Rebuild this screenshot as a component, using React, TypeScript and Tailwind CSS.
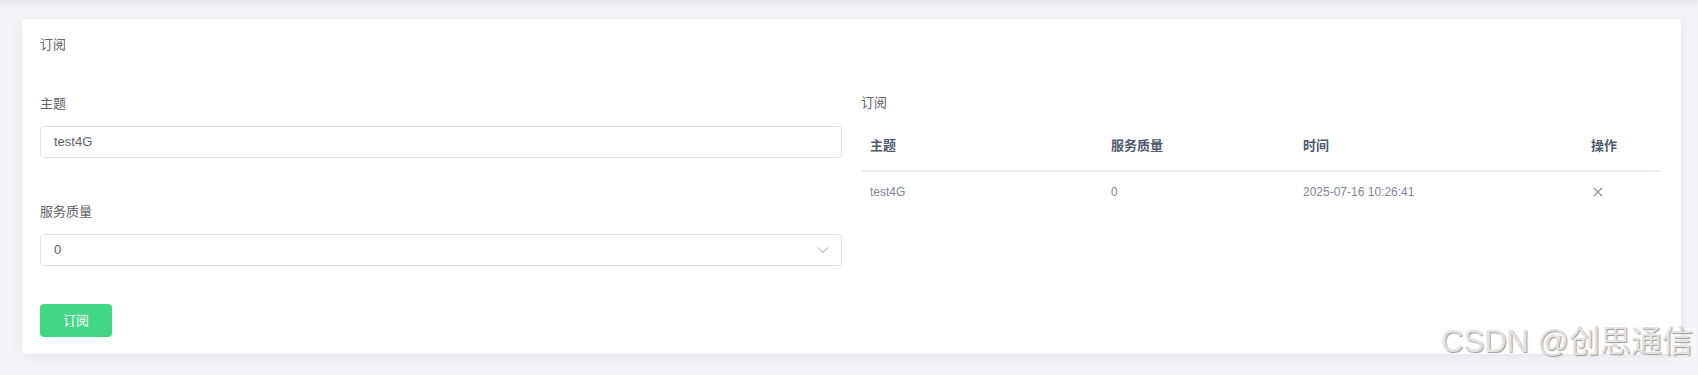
import React from "react";

const font = "font-['Liberation_Sans','Noto_Sans_CJK_SC',sans-serif]";

const rows = [{ topic: "test4G", qos: "0", time: "2025-07-16 10:26:41" }];

function ChevronDown() {
  return (
    <svg width="12" height="8" viewBox="0 0 12 8" fill="none">
      <path d="M1 1.5 6 6.5 11 1.5" stroke="#c0c4cc" strokeWidth="1.2" />
    </svg>
  );
}

function CloseIcon() {
  return (
    <svg width="10" height="10" viewBox="0 0 10 10" fill="none">
      <path d="M1 1 9 9M9 1 1 9" stroke="#8a8f99" strokeWidth="1.1" />
    </svg>
  );
}

export default function App() {
  return (
    <div className={`relative min-h-[375px] bg-[#f4f5f9] ${font}`}>
      {/* shadow of the card above */}
      <div className="h-[10px] bg-linear-to-b from-[#e7e9ee] to-[#f4f5f9]" />

      <div className="ml-[22px] mr-[17px] mt-[9px] rounded-[4px] bg-white pt-[16px] pb-[17px] pl-[18px] pr-[19px] shadow-[0_2px_12px_rgba(0,0,0,0.07)]">
        <h2 className="text-[13px] leading-[20px] text-[#606266]">订阅</h2>

        <div className="mt-[37px] flex gap-[19px]">
          {/* form */}
          <div className="w-[802px] shrink-0 pt-[2px]">
            <label className="block text-[13px] leading-[20px] text-[#606266]">主题</label>
            <div className="mt-[12px] flex h-[32px] items-center rounded-[4px] border border-[#dcdfe6] px-[13px] text-[13px] text-[#606266]">
              test4G
            </div>

            <label className="mt-[44px] block text-[13px] leading-[20px] text-[#606266]">服务质量</label>
            <div className="mt-[12px] flex h-[32px] items-center justify-between rounded-[4px] border border-[#dcdfe6] pl-[13px] pr-[12px] text-[13px] text-[#606266]">
              <span>0</span>
              <ChevronDown />
            </div>

            <button className="mt-[38px] flex h-[33px] w-[72px] items-center justify-center rounded-[4px] bg-[#43d886] text-[13px] text-white">
              订阅
            </button>
          </div>

          {/* subscriptions */}
          <div className="flex-1 pt-[1px]">
            <div className="text-[13px] leading-[20px] text-[#606266]">订阅</div>
            <div className="mt-[9px]">
              <div className="grid h-[50px] grid-cols-[241px_192px_288px_1fr] items-center border-b-2 border-[#ebeef5] text-[13px] font-bold text-[#515a6e]">
                <div className="pl-[9px]">主题</div>
                <div className="pl-[9px]">服务质量</div>
                <div className="pl-[9px]">时间</div>
                <div className="pl-[9px]">操作</div>
              </div>
              {rows.map((r) => (
                <div
                  key={r.topic}
                  className="grid h-[40px] grid-cols-[241px_192px_288px_1fr] items-center text-[12px] text-[#808695]"
                >
                  <div className="pl-[9px]">{r.topic}</div>
                  <div className="pl-[9px]">{r.qos}</div>
                  <div className="pl-[9px]">{r.time}</div>
                  <div className="pl-[11px]">
                    <CloseIcon />
                  </div>
                </div>
              ))}
            </div>
          </div>
        </div>
      </div>

      {/* watermark */}
      <div className="absolute right-[5px] top-[326px] text-[31px] leading-none text-[#e2e2e2] [text-shadow:1px_1px_1px_#9c9c9c]">
        CSDN @创思通信
      </div>
    </div>
  );
}
